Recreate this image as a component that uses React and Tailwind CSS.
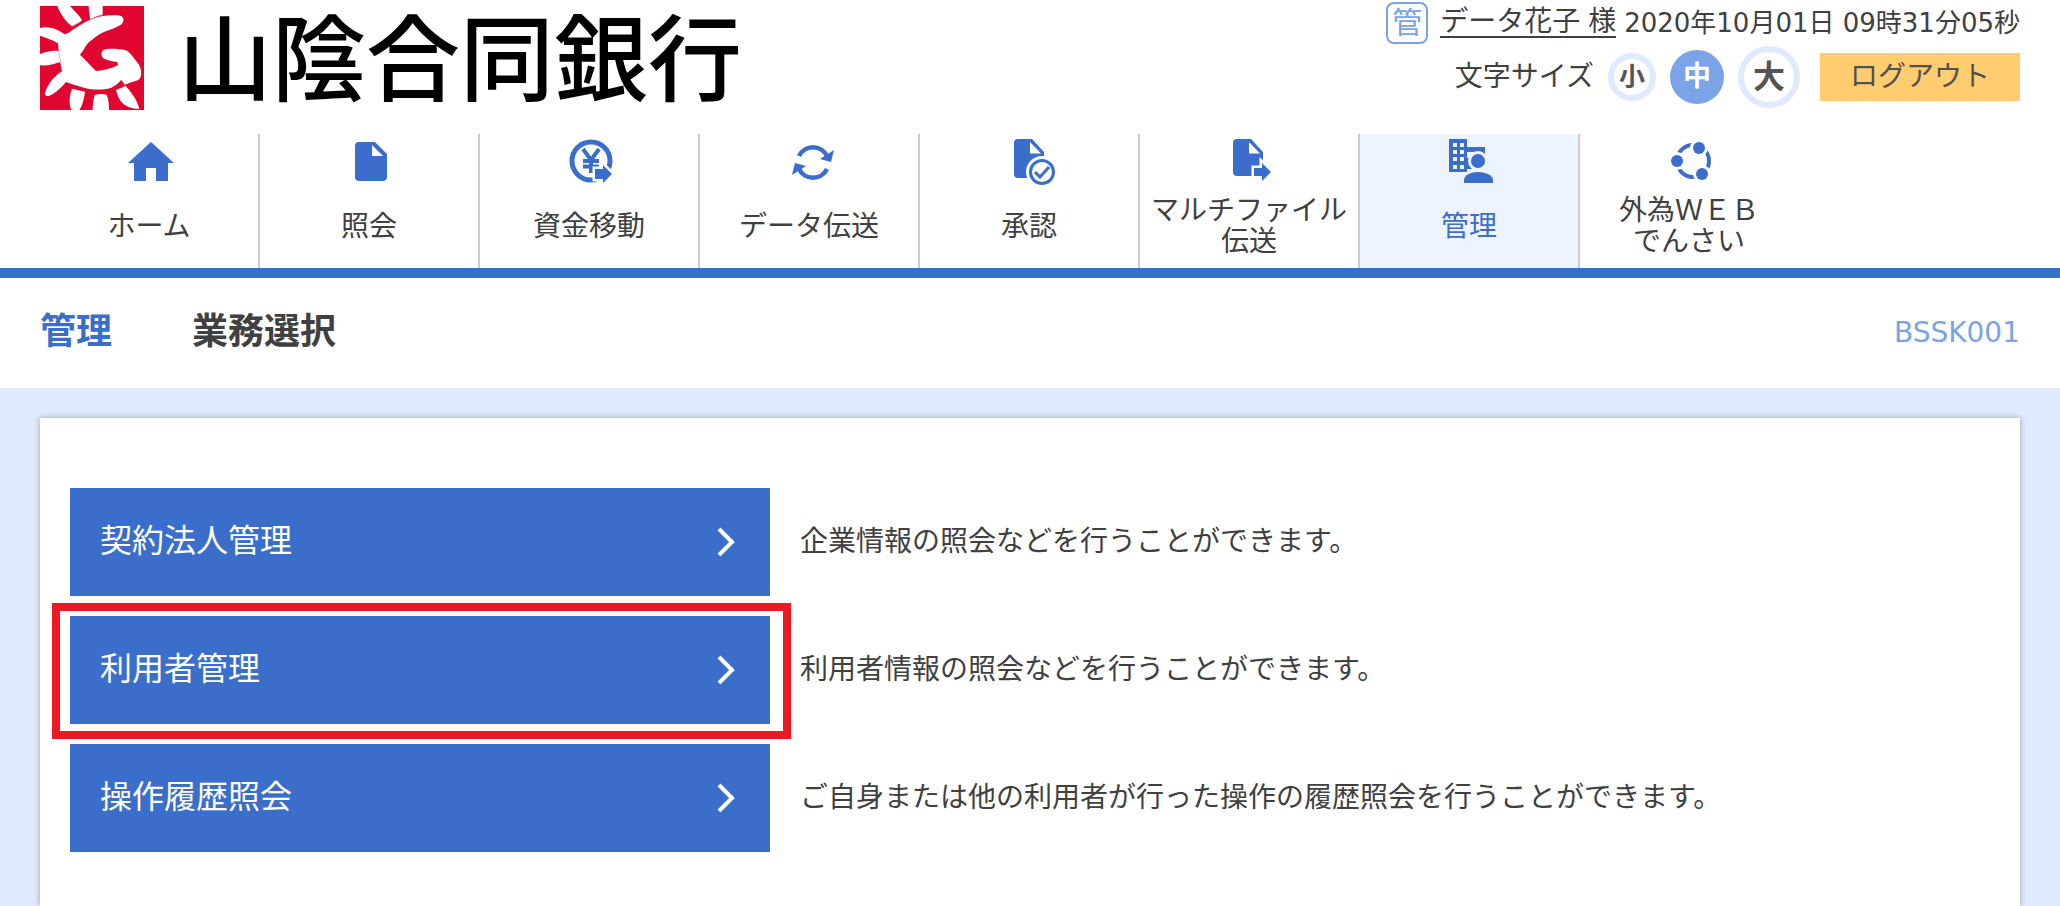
import React, { useState } from 'react';
import clsx from 'clsx';

const BankMark = () => (
    <svg viewBox="30 18 312 312" className="size-26 shrink-0" aria-hidden="true">
        <rect x="30" y="18" width="312" height="312" fill="#e0062f" />
        <g fill="#fff">
            <path d="M262 46C280 46 286 60 276 71C266 81 240 88 222 96C204 104 196 112 180 124C166 135 164 150 150 164C164 176 180 196 198 213C218 212 240 207 264 196L262 186C245 183 232 181 222 176C212 170 212 154 222 149C240 144 268 148 286 150C298 154 306 168 318 182C330 196 336 210 333 226C331 240 322 243 306 246L284 254L273 240C262 254 250 262 234 266C210 270 186 270 164 264L124 252L108 246C96 260 80 278 58 287C50 290 44 288 45 280C50 262 64 234 96 214L88 176L84 130C88 112 98 104 116 98C136 84 160 68 184 58C206 48 236 44 262 46Z" />
            <path d="M82 18H120C132 32 148 46 156 60C150 68 138 72 126 79C108 66 92 44 82 18Z" />
            <path d="M176 18H218V44C204 46 192 52 180 58C180 46 176 32 176 18Z" />
            <path d="M30 84C46 80 66 82 82 90C94 96 104 102 110 110C100 114 90 122 84 130C68 120 46 112 30 107Z" />
            <path d="M30 162C48 154 68 150 86 153L92 186C72 192 50 198 30 196Z" />
            <path d="M126 266L165 275C162 296 158 316 148 330H124C116 310 118 286 126 266Z" />
            <path d="M194 285C206 281 220 281 230 284C236 298 237 314 237 330H188C188 314 190 298 194 285Z" />
            <path d="M258 270C268 266 278 262 286 257C302 274 320 296 328 326C312 328 294 322 280 312C268 302 262 286 258 270Z" />
        </g>
        <g stroke="#ee7f92" strokeWidth="2" fill="none">
            <path d="M128 80C138 72 150 68 157 61M180 58L218 45M86 153L92 188M274 238L284 254" />
        </g>
    </svg>
);

const iconProps = {
    viewBox: '0 0 52 48',
    className: 'h-12 w-13',
    fill: 'currentColor',
    'aria-hidden': true,
};

const HomeIcon = () => (
    <svg {...iconProps}>
        <path d="M28 4L51 25H45V43H33V30H23V43H11V25H5Z" />
    </svg>
);

const FileIcon = () => (
    <svg {...iconProps}>
        <path d="M16 4H32L44 16V39Q44 43 40 43H16Q12 43 12 39V8Q12 4 16 4Z" />
        <path d="M29 7V18H40Z" fill="#fff" />
    </svg>
);

const YenIcon = () => (
    <svg {...iconProps}>
        <circle cx="28" cy="23" r="19" fill="none" stroke="currentColor" strokeWidth="5" />
        <path
            d="M20 11L28 22L36 11M28 22V35M20 23H36M20 28.500H36"
            fill="none"
            stroke="currentColor"
            strokeWidth="4"
        />
        <path d="M32 31H40V27L49 36L40 45V41H32Z" stroke="#fff" strokeWidth="5" />
        <path d="M32 31H40V27L49 36L40 45V41H32Z" />
    </svg>
);

const TransferIcon = () => (
    <svg {...iconProps}>
        <g fill="none" stroke="currentColor" strokeWidth="4.5">
            <path d="M16 18A15.500 15.500 0 0 1 44 18" />
            <path d="M44 31A15.500 15.500 0 0 1 16 31" />
        </g>
        <path d="M51 12L37 21L48 24Z" />
        <path d="M9 37L23 28L12 25Z" />
    </svg>
);

const ApproveIcon = () => (
    <svg {...iconProps}>
        <path d="M15 1H29L41 14V40H15Q11 40 11 36V5Q11 1 15 1Z" />
        <path d="M27 4V15.500H38Z" fill="#fff" />
        <circle cx="39" cy="34" r="16" fill="#fff" />
        <circle cx="39" cy="34" r="11.500" fill="none" stroke="currentColor" strokeWidth="3" />
        <path d="M32 34L37 39L46 29" fill="none" stroke="currentColor" strokeWidth="3" />
    </svg>
);

const MultiFileIcon = () => (
    <svg {...iconProps}>
        <path d="M14 1H28L40 14V38H14Q10 38 10 34V5Q10 1 14 1Z" />
        <path d="M26 4V15.500H37Z" fill="#fff" />
        <path d="M31 30H39V25L48 34L39 43V38H31Z" stroke="#fff" strokeWidth="5" />
        <path d="M31 30H39V25L48 34L39 43V38H31Z" />
    </svg>
);

const windowRows = [5, 12, 19, 27];

const AdminIcon = () => (
    <svg {...iconProps}>
        <path d="M6 1H24V9H42V15H40V28H24V34H6Z" />
        <path d="M24 14H40V28H26V24H24Z" fill="#edf4ff" />
        {windowRows.map((y) => (
            <g key={y} fill="#edf4ff">
                <rect x="10" y={y} width="4" height="4" />
                <rect x="17" y={y} width="4" height="4" />
            </g>
        ))}
        <path d="M24 20H30V31H24Z" />
        <path d="M37 12H42V17H40Z" />
        <circle cx="35" cy="23" r="10" fill="#edf4ff" />
        <path d="M18 48C18 34 26 31 35 31S52 34 52 48Z" fill="#edf4ff" />
        <circle cx="35" cy="23" r="7" />
        <path d="M21 45V42C21 37 28 34 35 34S50 37 50 42V45Z" />
    </svg>
);

const NetworkIcon = () => (
    <svg {...iconProps}>
        <circle cx="30" cy="23" r="16" fill="none" stroke="currentColor" strokeWidth="4" />
        <g fill="#fff">
            <circle cx="14" cy="23" r="9" />
            <circle cx="36" cy="10" r="9" />
            <circle cx="39" cy="36" r="9" />
        </g>
        <circle cx="14" cy="23" r="6" />
        <circle cx="36" cy="10" r="6" />
        <circle cx="39" cy="36" r="6" />
    </svg>
);

const navItems = [
    { label: 'ホーム', Icon: HomeIcon },
    { label: '照会', Icon: FileIcon },
    { label: '資金移動', Icon: YenIcon },
    { label: 'データ伝送', Icon: TransferIcon },
    { label: '承認', Icon: ApproveIcon },
    { label: 'マルチファイル\n伝送', Icon: MultiFileIcon },
    { label: '管理', Icon: AdminIcon, active: true },
    { label: '外為ＷＥＢ\nでんさい', Icon: NetworkIcon },
];

const sizes = [
    { label: '小', style: 'size-12 text-[26px]' },
    { label: '中', style: 'size-[54px] text-[28px]' },
    { label: '大', style: 'size-[62px] text-[32px]' },
];

const menuItems = [
    { label: '契約法人管理', text: '企業情報の照会などを行うことができます。' },
    { label: '利用者管理', text: '利用者情報の照会などを行うことができます。', marked: true },
    { label: '操作履歴照会', text: 'ご自身または他の利用者が行った操作の履歴照会を行うことができます。' },
];

const Header = () => {
    const [size, setSize] = useState('中');

    return (
        <header className="flex h-[134px] items-start justify-between px-10">
            <div className="flex items-start gap-[34px] pt-1.5">
                <BankMark />
                <span className="pt-1 text-[94px] leading-[104px] font-medium whitespace-nowrap text-black">
                    山陰合同銀行
                </span>
            </div>

            <div className="flex flex-col items-end pt-0.5">
                <div className="flex h-[42px] items-center whitespace-nowrap">
                    <span className="mr-3 flex size-[42px] items-center justify-center rounded-lg border-2 border-[#7aa3e8] text-[30px] leading-none text-[#7aa3e8]">
                        管
                    </span>
                    <a href="#user" className="mr-2 border-b-2 border-[#404040] text-[28px] leading-[28px]">
                        データ花子 様
                    </a>
                    <time className="font-['DejaVu_Sans','Noto_Sans_CJK_JP',sans-serif] text-[26px] leading-[30px]">
                        2020年10月01日 09時31分05秒
                    </time>
                </div>

                <div className="mt-0.5 flex items-center gap-3.5 whitespace-nowrap">
                    <span className="text-[28px] leading-[30px]">文字サイズ</span>
                    {sizes.map((item) => (
                        <button
                            key={item.label}
                            type="button"
                            onClick={() => setSize(item.label)}
                            className={clsx(
                                'flex items-center justify-center rounded-full leading-none font-bold',
                                item.style,
                                size === item.label
                                    ? 'bg-[#7aa3e8] text-white'
                                    : 'border-6 border-[#e0eaff] bg-white text-[#555]'
                            )}
                        >
                            {item.label}
                        </button>
                    ))}
                    <button type="button" className="ml-1.5 h-12 w-[200px] bg-[#ffcd70] text-[28px] leading-none text-[#505050]">
                        ログアウト
                    </button>
                </div>
            </div>
        </header>
    );
};

const GlobalNav = () => (
    <nav className="flex border-b-10 border-[#3b6ecb] px-10">
        {navItems.map(({ label, Icon, active }) => (
            <a
                key={label}
                href="#menu"
                className={clsx(
                    'flex h-[134px] w-[220px] flex-col items-center border-r-2 border-[#ccc] pt-1 last:border-transparent',
                    active && 'bg-[#edf4ff] text-[#3b6ecb]'
                )}
            >
                <span className="text-[#3b6ecb]">
                    <Icon />
                </span>
                <span className="mt-2 flex h-16 items-center text-center text-[28px] leading-[31px] whitespace-pre">
                    {label}
                </span>
            </a>
        ))}
    </nav>
);

const MenuRow = ({ label, text, marked }) => (
    <li className="flex items-center gap-[30px]">
        <div className="relative w-[700px] shrink-0">
            <button
                type="button"
                className="flex h-[108px] w-full items-center justify-between bg-[#3b6ecb] pr-[34px] pl-[30px] text-[32px] leading-10 text-white"
            >
                <span className="pb-0.5">{label}</span>
                <svg viewBox="0 0 20 30" className="h-[30px] w-5" fill="none" stroke="currentColor" strokeWidth="4" aria-hidden="true">
                    <path d="M3 2L16 15L3 28" />
                </svg>
            </button>
            {marked && (
                <div className="pointer-events-none absolute -top-[13px] -right-[21px] -bottom-[15px] -left-[18px] border-8 border-[#f01822]" />
            )}
        </div>
        <p className="text-[28px] leading-10">{text}</p>
    </li>
);

const App = () => (
    <div className="flex min-h-screen flex-col bg-white font-['Liberation_Sans','Noto_Sans_CJK_JP',sans-serif] text-[#404040]">
        <Header />
        <GlobalNav />

        <div className="flex h-[110px] items-center justify-between px-10">
            <h1 className="flex gap-20 pb-0.5 text-[36px] leading-10 font-bold">
                <span className="text-[#3b6ecb]">管理</span>
                <span>業務選択</span>
            </h1>
            <span className="font-['DejaVu_Sans',sans-serif] text-[28px] leading-10 text-[#7aa3e8]">BSSK001</span>
        </div>

        <main className="flex flex-1 flex-col bg-[#e0eaff] px-10 pt-[30px]">
            <section className="flex-1 bg-white px-[30px] pt-[70px] shadow-[0_0_6px_rgba(0,0,0,0.3)]">
                <ul className="flex flex-col gap-5">
                    {menuItems.map((item) => (
                        <MenuRow key={item.label} {...item} />
                    ))}
                </ul>
            </section>
        </main>
    </div>
);

export default App;
